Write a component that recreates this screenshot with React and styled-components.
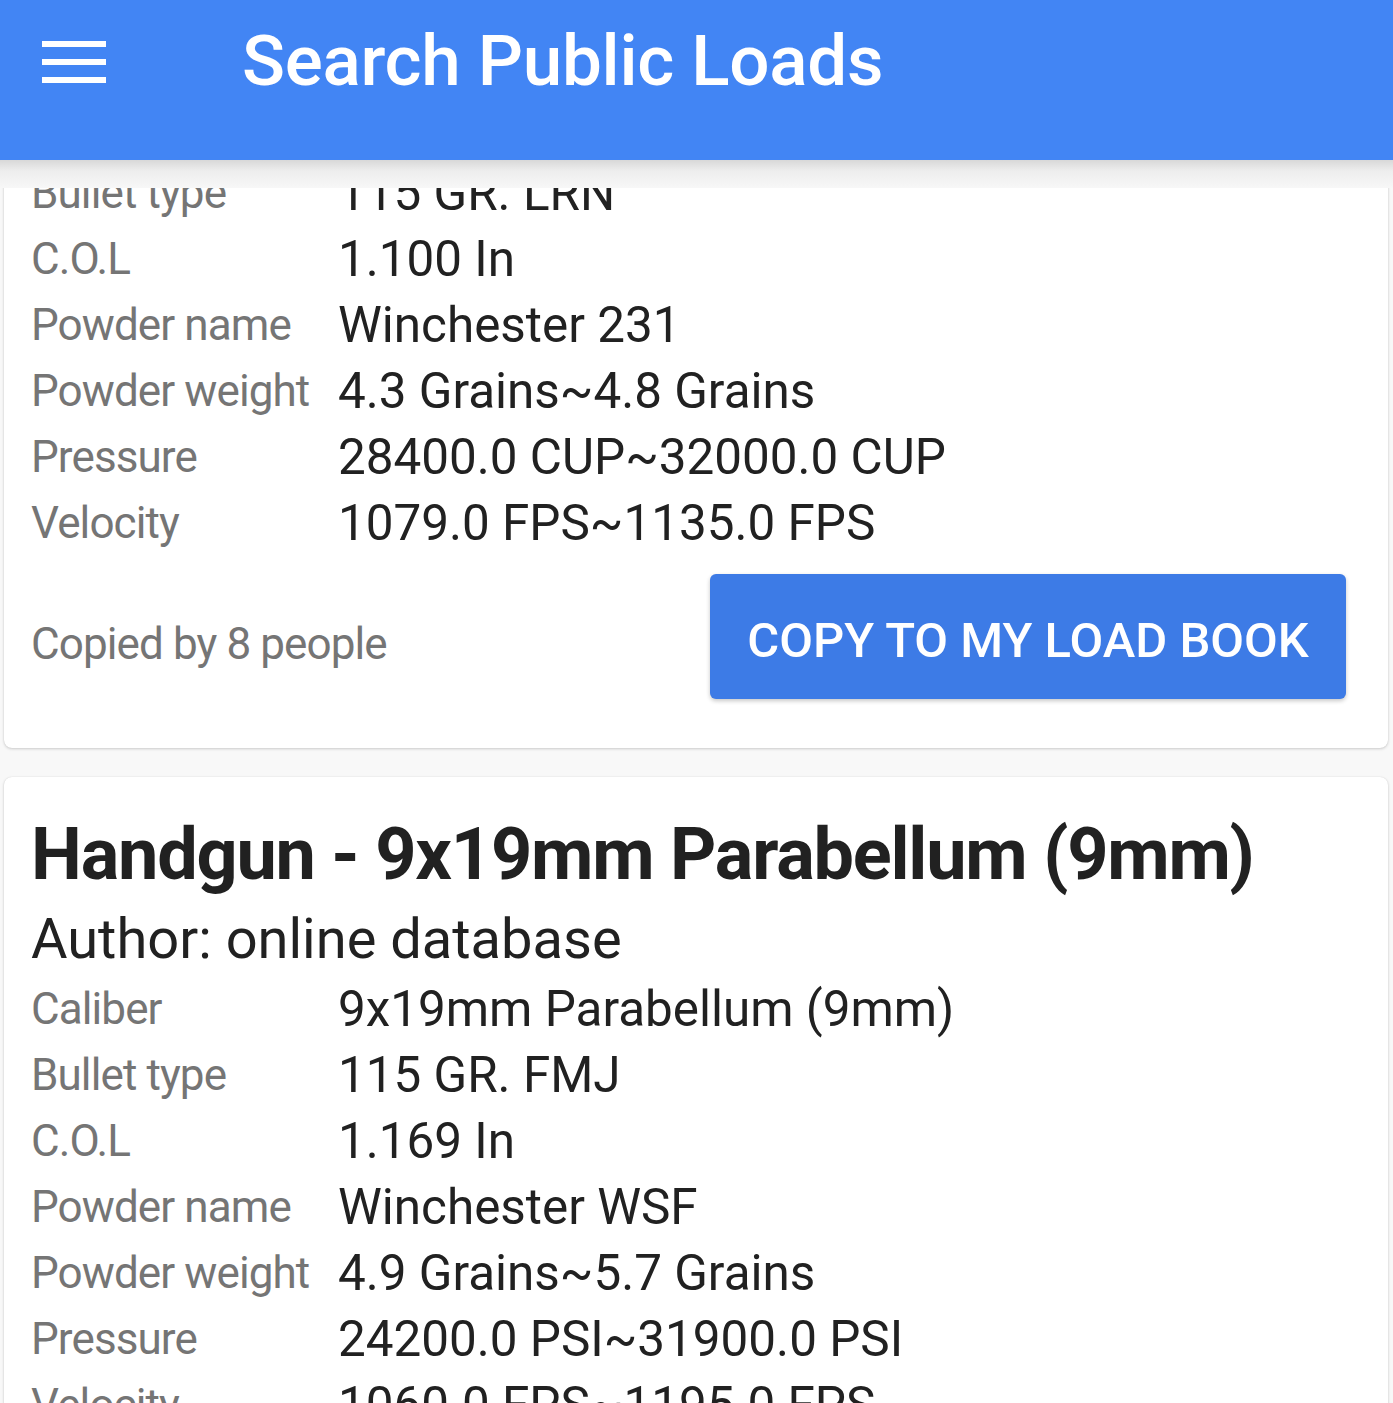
import React, { useLayoutEffect, useRef } from 'react';
import styled, { createGlobalStyle } from 'styled-components';

const GlobalStyle = createGlobalStyle`
  html, body {
    margin: 0;
    padding: 0;
    background: #f8f8f8;
    font-family: Roboto, "Noto Sans", sans-serif;
  }
`;

const Screen = styled.div`
  width: 1393px;
  height: 1403px;
  display: flex;
  flex-direction: column;
  overflow: hidden;
  background: #f8f8f8;
`;

const AppBar = styled.header`
  height: 160px;
  flex: none;
  display: flex;
  align-items: flex-start;
  background: #4285f4;
  color: #fff;
`;

const MenuButton = styled.button`
  width: 64px;
  height: 42px;
  margin: 41px 0 0 42px;
  padding: 0;
  border: 0;
  background: none;
  display: flex;
  flex-direction: column;
  justify-content: space-between;

  span {
    display: block;
    height: 6px;
    background: #fff;
  }
`;

const Title = styled.h1`
  margin: 16px 0 0 136px;
  font-size: 71px;
  line-height: 90px;
  font-weight: 500;
  letter-spacing: -0.3px;
`;

const Elevation = styled.div`
  height: 28px;
  flex: none;
  background: linear-gradient(#d8d8d8, #eeeeee 40%, #f7f7f7);
`;

const Viewport = styled.main`
  flex: 1;
  overflow-y: auto;
  scrollbar-width: none;
  &::-webkit-scrollbar { display: none; }
`;

const List = styled.div`
  display: flex;
  flex-direction: column;
  gap: 29px;
  padding: 0 5px 40px 4px;
`;

const Card = styled.article`
  background: #fff;
  border-radius: 8px;
  box-shadow: 0 1px 3px rgba(0, 0, 0, 0.18), 0 0 1px rgba(0, 0, 0, 0.12);
  padding: 33px 42px 49px 27px;
`;

const CardTitle = styled.h2`
  margin: 0 0 2px;
  font-size: 72px;
  line-height: 90px;
  font-weight: 700;
  letter-spacing: -1.2px;
  color: #212121;
`;

const Author = styled.div`
  font-size: 56px;
  line-height: 74px;
  color: #212121;
`;

const Specs = styled.dl`
  margin: 0;
  display: grid;
  grid-template-columns: 307px 1fr;
  grid-auto-rows: 66px;
  align-items: center;
`;

const Label = styled.dt`
  font-size: 44px;
  line-height: 66px;
  letter-spacing: -0.9px;
  color: #757575;
`;

const Value = styled.dd`
  margin: 0;
  font-size: 49.4px;
  line-height: 66px;
  color: #212121;
`;

const Footer = styled.div`
  margin-top: 18px;
  display: flex;
  align-items: center;
  justify-content: space-between;
`;

const Copied = styled.span`
  margin-top: 15px;
  font-size: 44px;
  line-height: 66px;
  letter-spacing: -0.9px;
  color: #757575;
`;

const CopyButton = styled.button`
  height: 125px;
  width: 636px;
  padding: 8px 0 0;
  border: 0;
  border-radius: 6px;
  background: #3d7be6;
  color: #fff;
  font-family: Roboto, sans-serif;
  font-size: 49px;
  font-weight: 500;
  box-shadow: 0 2px 4px rgba(0, 0, 0, 0.22);
`;

const loads = [
  {
    title: 'Handgun - 9x19mm Parabellum (9mm)',
    author: 'online database',
    specs: [
      ['Caliber', '9x19mm Parabellum (9mm)'],
      ['Bullet type', '115 GR. LRN'],
      ['C.O.L', '1.100 In'],
      ['Powder name', 'Winchester 231'],
      ['Powder weight', '4.3 Grains~4.8 Grains'],
      ['Pressure', '28400.0 CUP~32000.0 CUP'],
      ['Velocity', '1079.0 FPS~1135.0 FPS'],
    ],
    copied: 8,
  },
  {
    title: 'Handgun - 9x19mm Parabellum (9mm)',
    author: 'online database',
    specs: [
      ['Caliber', '9x19mm Parabellum (9mm)'],
      ['Bullet type', '115 GR. FMJ'],
      ['C.O.L', '1.169 In'],
      ['Powder name', 'Winchester WSF'],
      ['Powder weight', '4.9 Grains~5.7 Grains'],
      ['Pressure', '24200.0 PSI~31900.0 PSI'],
      ['Velocity', '1060.0 FPS~1195.0 FPS'],
    ],
    copied: 5,
  },
];

const LoadCard = ({ load }) => (
  <Card>
    <CardTitle>{load.title}</CardTitle>
    <Author>Author: {load.author}</Author>
    <Specs>
      {load.specs.map(([k, v]) => (
        <React.Fragment key={k}>
          <Label>{k}</Label>
          <Value>{v}</Value>
        </React.Fragment>
      ))}
    </Specs>
    <Footer>
      <Copied>Copied by {load.copied} people</Copied>
      <CopyButton>COPY TO MY LOAD BOOK</CopyButton>
    </Footer>
  </Card>
);

const App = () => {
  const viewport = useRef(null);

  useLayoutEffect(() => {
    if (viewport.current) viewport.current.scrollTop = 293;
  }, []);

  return (
    <Screen>
      <GlobalStyle />
      <AppBar>
        <MenuButton aria-label="menu">
          <span />
          <span />
          <span />
        </MenuButton>
        <Title>Search Public Loads</Title>
      </AppBar>
      <Elevation />
      <Viewport ref={viewport}>
        <List>
          {loads.map((l, i) => <LoadCard key={i} load={l} />)}
        </List>
      </Viewport>
    </Screen>
  );
};

export default App;
